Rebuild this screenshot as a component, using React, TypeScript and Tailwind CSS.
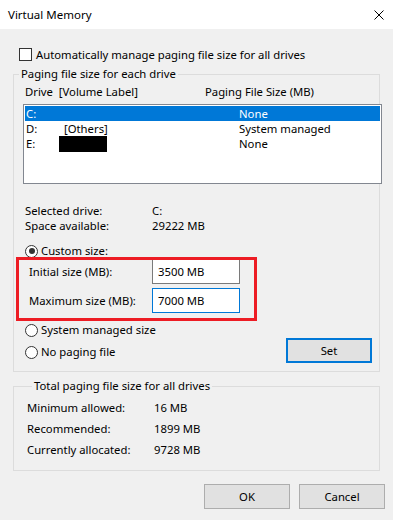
import React from 'react';

const font = { fontFamily: '"Segoe UI", "Noto Sans", "Liberation Sans", sans-serif' };

const Radio: React.FC<{ checked?: boolean; label: string }> = ({ checked, label }) => (
  <div className="flex items-center h-[16px]">
    <span className="flex items-center justify-center w-[13px] h-[13px] rounded-full border border-[#333] bg-white">
      {checked && <span className="w-[6px] h-[6px] rounded-full bg-[#333]" />}
    </span>
    <span className="ml-[3px]">{label}</span>
  </div>
);

const Button: React.FC<{ label: string; focused?: boolean; className?: string }> = ({ label, focused, className }) => (
  <button
    className={
      'flex items-center justify-center w-[86px] h-[25px] bg-[#e1e1e1] text-black ' +
      (focused ? 'border-2 border-[#0078d7] ' : 'border border-[#adadad] ') +
      (className ?? '')
    }
  >
    {label}
  </button>
);

const drives = [
  { drive: 'C:', label: '', size: 'None', selected: true },
  { drive: 'D:', label: '[Others]', size: 'System managed' },
  { drive: 'E:', label: null, size: 'None' },
];

export default function App() {
  return (
    <div className="w-[393px] h-[520px] flex flex-col text-[11.3px] leading-[16px] text-black select-none" style={font}>
      {/* title bar */}
      <div className="h-[29px] bg-white flex items-center justify-between pl-[8px] pr-[9px] shrink-0 text-[11.5px]">
        <span>Virtual Memory</span>
        <svg width="10" height="10" viewBox="0 0 10 10">
          <path d="M0.5 0.5 L9.5 9.5 M9.5 0.5 L0.5 9.5" stroke="#000" strokeWidth="1" />
        </svg>
      </div>

      <div className="flex-1 bg-[#f0f0f0] flex flex-col">
        {/* auto manage */}
        <div className="flex items-center mt-[19px] ml-[19px] h-[13px]">
          <span className="w-[13px] h-[13px] border border-[#333] bg-white" />
          <span className="ml-[4px]">Automatically manage paging file size for all drives</span>
        </div>

        {/* paging file per drive */}
        <fieldset className="mt-[5px] ml-[13px] w-[367px] min-w-0 border border-[#dcdcdc] flex flex-col">
          <legend className="ml-[5px] px-[2px]">Paging file size for each drive</legend>

          <div className="flex h-[16px] mt-[2px] pl-[11px]">
            <span className="w-[180px]">Drive&nbsp;&nbsp;[Volume Label]</span>
            <span>Paging File Size (MB)</span>
          </div>

          <div className="mt-[4px] ml-[9px] w-[359px] shrink-0 h-[80px] border border-[#828790] bg-white p-[1px] flex flex-col">
            {drives.map((d) => (
              <div
                key={d.drive}
                className={
                  'flex items-center h-[15px] pl-[1px] ' +
                  (d.selected ? 'bg-[#0078d7] text-white' : '')
                }
              >
                <span className="w-[33px]">{d.drive}</span>
                <span className="w-[180px] flex items-center">
                  {d.label === null ? (
                    <span className="block w-[48px] h-[16px] bg-black mt-[1px]" />
                  ) : (
                    <span className="pl-[5px]">{d.label}</span>
                  )}
                </span>
                <span>{d.size}</span>
              </div>
            ))}
          </div>

          <div className="mt-[19px] pl-[11px] flex flex-col">
            <div className="flex h-[15px] items-center">
              <span className="w-[127px]">Selected drive:</span>
              <span>C:</span>
            </div>
            <div className="flex h-[15px] items-center">
              <span className="w-[127px]">Space available:</span>
              <span>29222 MB</span>
            </div>
          </div>

          <div className="mt-[10px] pl-[11px]">
            <Radio checked label="Custom size:" />
          </div>

          {/* custom size fields, with red annotation on top */}
          <div className="relative flex flex-col gap-[4px] pl-[15px] pb-[9px]">
            <div className="flex items-center h-[25px]">
              <span className="w-[123px]">Initial size (MB):</span>
              <div className="w-[88px] h-[25px] border border-[#7a7a7a] bg-white flex items-center pl-[5px]">3500 MB</div>
            </div>
            <div className="flex items-center h-[25px]">
              <span className="w-[123px]">Maximum size (MB):</span>
              <div className="w-[88px] h-[25px] border border-[#0078d7] bg-white flex items-center pl-[5px]">7000 MB</div>
            </div>
            <div className="absolute left-[2px] top-[-2px] w-[241px] h-[64px] border-[3px] border-[#ed1c24]" />
          </div>

          <div className="pl-[11px] flex flex-col">
            <Radio label="System managed size" />
            <div className="flex items-center justify-between pr-[7px]">
              <div className="pt-[3px]">
                <Radio label="No paging file" />
              </div>
              <Button label="Set" focused />
            </div>
          </div>
          <div className="h-[8px]" />
        </fieldset>

        {/* totals */}
        <fieldset className="mt-[6px] ml-[13px] w-[367px] min-w-0 border border-[#dcdcdc] flex flex-col pt-[3px] pb-[10px] pl-[13px]">
          <legend className="ml-[5px] px-[2px]">Total paging file size for all drives</legend>
          {[
            ['Minimum allowed:', '16 MB'],
            ['Recommended:', '1899 MB'],
            ['Currently allocated:', '9728 MB'],
          ].map(([k, v]) => (
            <div key={k} className="flex items-center h-[21px]">
              <span className="w-[127px]">{k}</span>
              <span>{v}</span>
            </div>
          ))}
        </fieldset>

        <div className="flex justify-end gap-[9px] mt-[13px] mr-[8px]">
          <Button label="OK" />
          <Button label="Cancel" />
        </div>
      </div>
    </div>
  );
}
